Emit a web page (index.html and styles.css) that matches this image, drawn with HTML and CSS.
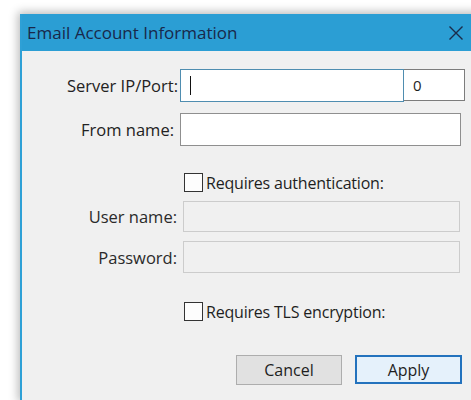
FILE: index.html
```html
<!DOCTYPE html>
<html lang="en">
<head>
<meta charset="utf-8">
<title>Email Account Information</title>
<link rel="stylesheet" href="styles.css">
</head>
<body>
<div class="window">
  <div class="titlebar">
    <span class="title">Email Account Information</span>
    <svg class="close" width="16" height="16" viewBox="0 0 16 16" aria-hidden="true">
      <path d="M1.5 1.5 L14.5 14.5 M14.5 1.5 L1.5 14.5" stroke="#1b2b4a" stroke-width="1.4" fill="none"/>
    </svg>
  </div>
  <div class="content">
    <div class="row row-server">
      <span class="label">Server IP/Port:</span>
      <div class="fields">
        <div class="input input-host focused"><span class="caret"></span></div>
        <div class="input input-port">0</div>
      </div>
    </div>
    <div class="row row-from">
      <span class="label">From name:</span>
      <div class="input input-wide"></div>
    </div>
    <div class="row row-check row-auth">
      <span class="label"></span>
      <label class="check"><span class="box"></span>Requires authentication:</label>
    </div>
    <div class="row row-user">
      <span class="label">User name:</span>
      <div class="input input-disabled"></div>
    </div>
    <div class="row row-pass">
      <span class="label">Password:</span>
      <div class="input input-disabled"></div>
    </div>
    <div class="row row-check row-tls">
      <span class="label"></span>
      <label class="check"><span class="box"></span>Requires TLS encryption:</label>
    </div>
    <div class="buttons">
      <button class="btn">Cancel</button>
      <button class="btn btn-default">Apply</button>
    </div>
  </div>
</div>
</body>
</html>
```
FILE: styles.css
```css
html, body {
  margin: 0;
  padding: 0;
  background: #ffffff;
  overflow: hidden;
}

body {
  width: 471px;
  height: 400px;
  padding: 14px 0 0 20px;
  box-sizing: border-box;
  font-family: "Open Sans", "Noto Sans", "DejaVu Sans", sans-serif;
  font-size: 16.5px;
  color: #1e1e1e;
}

.window {
  width: 470px;
  height: 386px;
  background: #f0f0f0;
  border-left: 2px solid #2ea0d6;
  box-shadow: 0 0 9px 2px rgba(0, 0, 0, 0.28);
  display: flex;
  flex-direction: column;
}

.titlebar {
  height: 37px;
  background: #2b9ed4;
  display: flex;
  align-items: center;
  padding-left: 5px;
  flex-shrink: 0;
}

.title {
  color: #19284a;
  font-size: 17px;
  width: 421px;
}

.close {
  width: 16px;
  height: 16px;
}

.content {
  padding-top: 18px;
  display: flex;
  flex-direction: column;
}

.row {
  display: flex;
  align-items: center;
}

.label {
  width: 156px;
  margin-right: 2px;
  box-sizing: border-box;
  text-align: right;
  flex-shrink: 0;
  color: #222;
}

.fields {
  display: flex;
}

.input {
  box-sizing: border-box;
  background: #ffffff;
  border: 1px solid #8a8a8a;
  display: flex;
  align-items: center;
  padding-left: 9px;
}

.row-server { height: 33px; }

.input-host {
  width: 224px;
  height: 33px;
  border-color: #4f8db0;
}

.caret {
  width: 1px;
  height: 19px;
  background: #111;
}

.input-port {
  width: 61px;
  height: 32px;
  border-left: none;
  border-color: #7c7c7c;
  font-size: 15px;
}

.row-from { margin-top: 11px; height: 33px; }
.row-from .label { padding-right: 4px; }

.input-wide {
  width: 281px;
  height: 33px;
  border-color: #8f8f8f;
}

.row-check { height: 19px; }
.row-auth { margin-top: 27px; }
.row-tls { margin-top: 29px; }

.check {
  display: flex;
  align-items: center;
  margin-left: 4px;
  font-size: 16px;
  letter-spacing: -0.2px;
  color: #1e1e1e;
}

.box {
  width: 19px;
  height: 19px;
  box-sizing: border-box;
  border: 1px solid #333;
  background: #fdfdfd;
  margin-right: 3px;
}

.row-user { margin-top: 9px; height: 31px; }
.row-pass { margin-top: 9px; height: 32px; }

.row-user .label,
.row-pass .label { width: 157px; margin-right: 4px; padding-right: 2px; color: #2a2a2a; }

.input-disabled {
  width: 277px;
  height: 100%;
  background: #f0f0f0;
  border-color: #cccccc;
}

.buttons {
  margin-top: 34px;
  margin-left: 214px;
  display: flex;
  gap: 13px;
}

.btn {
  font: inherit;
  font-size: 16px;
  color: #1e1e1e;
  width: 106px;
  height: 30px;
  background: #e1e1e1;
  border: 1px solid #adadad;
  padding: 0;
}

.btn-default {
  width: 107px;
  height: 29px;
  background: #e5f1fb;
  border: 2px solid #2372bd;
}
```
